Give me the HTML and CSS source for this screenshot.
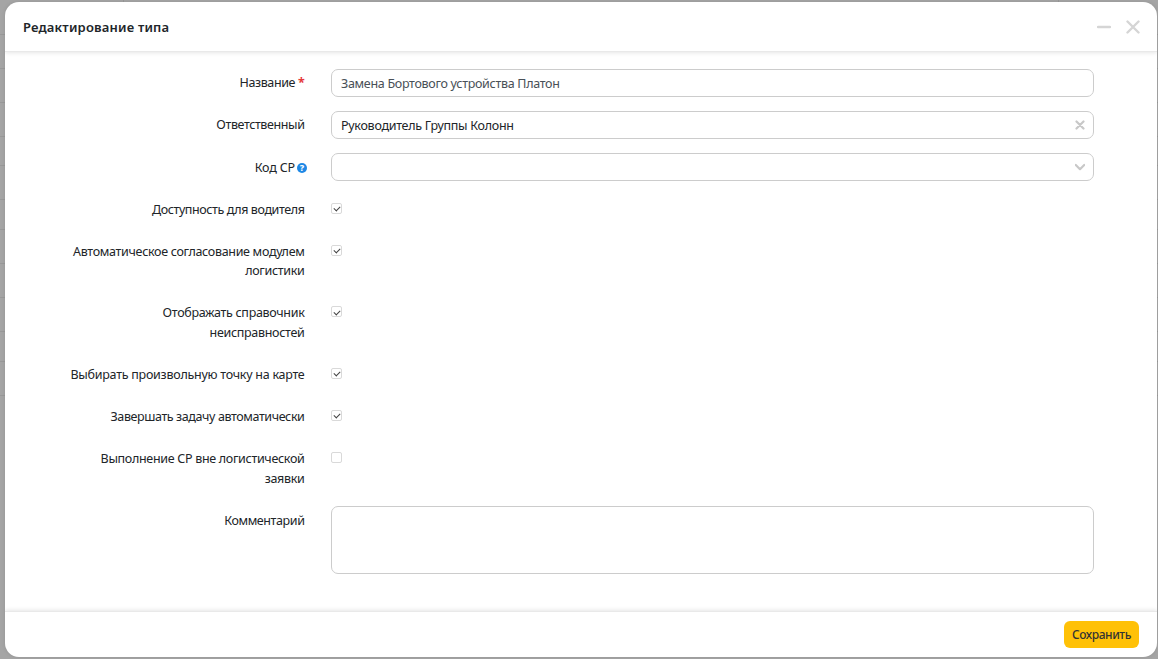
FILE: index.html
```
<!DOCTYPE html>
<html lang="ru">
<head>
    <meta charset="UTF-8">
    <meta name="viewport" content="width=device-width, initial-scale=1.0">
    <title>Редактирование типа</title>
    <link rel="stylesheet" href="styles.css">
</head>
<body>
    <!-- таблица под окном -->
    <div class="page">
        <div class="page-row head"><span></span><span></span></div>
        <div class="page-row"></div>
        <div class="page-row"></div>
        <div class="page-row"></div>
        <div class="page-row low"></div>
        <div class="page-row"></div>
        <div class="page-row low"></div>
        <div class="page-row"></div>
        <div class="page-row"></div>
        <div class="page-row"></div>
        <div class="page-row low"></div>
        <div class="page-row"></div>
        <div class="page-row"></div>
    </div>

    <div class="modal">
        <header class="modal-header">
            <h1 class="modal-title">Редактирование типа</h1>
            <button type="button" class="icon-btn" aria-label="Свернуть">
                <svg width="14" height="14" viewBox="0 0 14 14"><path d="M1 7h12"/></svg>
            </button>
            <button type="button" class="icon-btn" aria-label="Закрыть">
                <svg width="14" height="14" viewBox="0 0 14 14"><path d="M1.5 1.5l11 11M12.5 1.5l-11 11"/></svg>
            </button>
        </header>

        <form class="modal-body">
            <div class="form-row">
                <label for="name"><span class="tight">Название</span><span class="required">*</span></label>
                <input type="text" id="name" class="control muted" value="Замена Бортового устройства Платон">
            </div>
            <div class="form-row">
                <label class="tight">Ответственный</label>
                <div class="control select">
                    <span>Руководитель Группы Колонн</span>
                    <svg width="10" height="10" viewBox="0 0 10 10"><path d="M1.5 1.5l7 7M8.5 1.5l-7 7"/></svg>
                </div>
            </div>
            <div class="form-row">
                <label class="with-help">Код СР<span class="help">?</span></label>
                <div class="control select">
                    <span></span>
                    <svg width="10" height="10" viewBox="0 0 10 10"><path d="M0.8 3l4.2 4.2L9.2 3"/></svg>
                </div>
            </div>
            <div class="form-row">
                <label for="driver" class="tight">Доступность для водителя</label>
                <input type="checkbox" id="driver" checked>
            </div>
            <div class="form-row">
                <label for="approve">Автоматическое согласование модулем<br>логистики</label>
                <input type="checkbox" id="approve" checked>
            </div>
            <div class="form-row">
                <label for="faults">Отображать справочник<br>неисправностей</label>
                <input type="checkbox" id="faults" checked>
            </div>
            <div class="form-row">
                <label for="point" class="wide">Выбирать произвольную точку на карте</label>
                <input type="checkbox" id="point" checked>
            </div>
            <div class="form-row">
                <label for="finish" class="tight">Завершать задачу автоматически</label>
                <input type="checkbox" id="finish" checked>
            </div>
            <div class="form-row">
                <label for="outside">Выполнение СР вне логистической<br>заявки</label>
                <input type="checkbox" id="outside">
            </div>
            <div class="form-row">
                <label for="comment" class="tight">Комментарий</label>
                <textarea id="comment" class="control"></textarea>
            </div>
        </form>

        <footer class="modal-footer">
            <button type="button" class="save-btn">Сохранить</button>
        </footer>
    </div>
</body>
</html>
```

FILE: styles.css
```
* {
    box-sizing: border-box;
}

body {
    margin: 0;
    height: 659px;
    overflow: hidden;
    display: grid;
    background: #a5a5a5;
    color: #212529;
    font-family: "Noto Sans", "Open Sans", sans-serif;
    font-size: 12.5px;
    line-height: 19.5px;
}

.page, .modal {
    grid-area: 1 / 1;
}

.page {
    padding-top: 4px;
}

.page-row {
    height: 33.9px;
    border-top: 1px solid #999;
}

.page-row.low, .page-row.head {
    height: 29.8px;
}

.page-row.head {
    display: flex;
    justify-content: space-between;
    height: 30px;
    margin-top: -4px;
    padding: 0 99px 0 123px;
    border-top: none;
    height: 34px;
}

.page-row.head span {
    width: 1px;
    background: #999;
}

.modal {
    display: flex;
    flex-direction: column;
    margin: 2px 1px 2px 5px;
    background: #fff;
    border-radius: 14px;
    box-shadow: 0 0 4px rgba(0, 0, 0, 0.1);
    overflow: hidden;
    z-index: 1;
}

.modal-header {
    display: flex;
    align-items: center;
    height: 50px;
    padding: 0 17px 0 18px;
    border-bottom: 1px solid #e9e9e9;
    box-shadow: 0 1px 4px rgba(0, 0, 0, 0.1);
}

.modal-title {
    flex: 1;
    margin: 0;
    padding-top: 2px;
    font-size: 13px;
    font-weight: 600;
    letter-spacing: 0.18px;
}

.icon-btn {
    display: flex;
    margin-left: 15px;
    padding: 0;
    border: none;
    background: none;
}

svg {
    fill: none;
    stroke: #d5d5d5;
    stroke-width: 2.4;
    stroke-linecap: round;
    stroke-linejoin: round;
}

.modal-body {
    flex: 1;
    padding: 17px 63px 0 0;
}

.form-row {
    display: flex;
    align-items: flex-start;
    margin-bottom: 14.6px;
}

.form-row label {
    width: 299.5px;
    margin-right: 26.5px;
    padding: 4.4px 0 3.6px;
    text-align: right;
    white-space: nowrap;
    letter-spacing: -0.31px;
}

.form-row label.tight, .tight {
    letter-spacing: -0.4px;
}

.form-row label.wide {
    letter-spacing: -0.26px;
}

.form-row label.with-help {
    width: 302px;
    margin-right: 24px;
    letter-spacing: -0.15px;
}

.required {
    margin-left: 3px;
    color: #e5383b;
    font-weight: 700;
}

.help {
    display: inline-block;
    width: 10px;
    height: 10px;
    margin-left: 2px;
    border-radius: 50%;
    background: #1e88e5;
    color: #fff;
    font-size: 9px;
    font-weight: 800;
    line-height: 10px;
    text-align: center;
    vertical-align: 1px;
}

.control {
    flex: 1;
    height: 27.5px;
    padding: 1px 8px 0 9px;
    border: 1px solid #ccc;
    border-radius: 7px;
    background: #fff;
    color: #212529;
    font: inherit;
    letter-spacing: -0.28px;
    resize: none;
}

.control.muted {
    color: #495057;
    letter-spacing: -0.3px;
}

.select {
    display: flex;
    align-items: center;
    justify-content: space-between;
}

.select svg {
    stroke: #c8c8c8;
    stroke-width: 2.2;
}

textarea.control {
    height: 68px;
}

input[type="checkbox"] {
    appearance: none;
    width: 11px;
    height: 11px;
    margin: 7.5px 0 0;
    border: 1px solid #d9d9d9;
    border-radius: 2px;
    background: #fff;
}

input[type="checkbox"]:checked::before {
    content: "";
    display: block;
    width: 5px;
    height: 3px;
    margin: 2.2px 0 0 2px;
    border-left: 1.3px solid #444;
    border-bottom: 1.3px solid #444;
    transform: rotate(-45deg);
}

.modal-footer {
    display: flex;
    align-items: center;
    justify-content: flex-end;
    height: 46px;
    padding-right: 18px;
    border-top: 1px solid #e9e9e9;
    box-shadow: 0 -1px 4px rgba(0, 0, 0, 0.1);
}

.save-btn {
    width: 75px;
    height: 27px;
    padding: 0;
    border: none;
    border-radius: 6px;
    background: #ffc107;
    color: #333;
    font: inherit;
    font-size: 12px;
    font-weight: 500;
    letter-spacing: -0.45px;
}
```
